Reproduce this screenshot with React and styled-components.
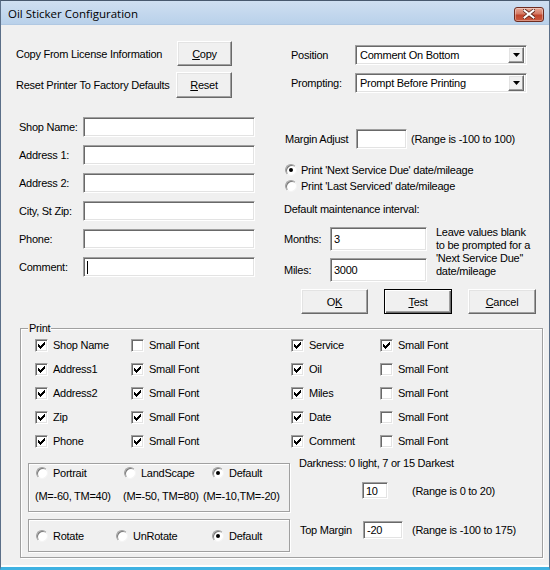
import React from 'react';
import styled, { createGlobalStyle, css } from 'styled-components';

const Global = createGlobalStyle`
  html, body { margin: 0; padding: 0; background: #ffffff; }
  body { font-family: "Liberation Sans", Arial, sans-serif; font-size: 11px; letter-spacing: -0.25px; color: #000; }
  * { box-sizing: border-box; }
`;

const Window = styled.div`
  width: 550px;
  height: 570px;
  display: flex;
  flex-direction: column;
  background: #f0f0f0;
  border: 1px solid #5b6f88;
  border-top-color: #48596e;
  border-bottom: 3px solid #3fb2e2;
  overflow: hidden;
`;

const TitleBar = styled.div`
  height: 24px;
  flex: none;
  display: flex;
  align-items: center;
  justify-content: space-between;
  padding: 0 5px 0 7px;
  background: linear-gradient(#cfdff1, #b9d1ea);
  border-bottom: 1px solid #b0c8e2;
`;

const TitleText = styled.div`
  font-family: "Open Sans", "Liberation Sans", sans-serif;
  font-size: 11.5px;
  letter-spacing: 0;
  color: #000;
  margin-top: 2px;
`;

const CloseButton = styled.div`
  width: 30px;
  height: 15px;
  margin-top: 3px;
  border-radius: 3px;
  border: 1px solid #6e2c20;
  background: linear-gradient(#e7a795 0%, #d47a64 45%, #c0452c 55%, #c95b40 100%);
  box-shadow: inset 0 0 0 1px rgba(255, 255, 255, 0.35);
  display: flex;
  align-items: center;
  justify-content: center;
`;

const Body = styled.div`
  flex: 1;
  display: flex;
  flex-direction: column;
  border-bottom: 2px solid #ffffff;
`;

const Top = styled.div`
  display: flex;
`;

const LeftCol = styled.div`
  width: 283px;
  padding: 16px 0 0 15px;
  display: flex;
  flex-direction: column;
`;

const RightCol = styled.div`
  flex: 1;
  padding-top: 20px;
  display: flex;
  flex-direction: column;
`;

const Row = styled.div`
  display: flex;
  align-items: center;
  height: ${(p) => p.$h || 20}px;
  margin-top: ${(p) => p.$mt || 0}px;
  padding-left: ${(p) => p.$pl || 0}px;
`;

const Label = styled.div`
  width: ${(p) => (p.$w ? `${p.$w}px` : 'auto')};
  flex: none;
  white-space: nowrap;
  margin-left: ${(p) => p.$ml || 0}px;
`;

const raised = css`
  background: #f0f0f0;
  border: 1px solid;
  border-color: #ffffff #696969 #696969 #ffffff;
  box-shadow: inset -1px -1px 0 #a0a0a0, inset 1px 1px 0 #e3e3e3;
`;

const sunken = css`
  background: #ffffff;
  border: 1px solid;
  border-color: #a0a0a0 #ffffff #ffffff #a0a0a0;
  box-shadow: inset 1px 1px 0 #696969, inset -1px -1px 0 #e3e3e3;
`;

const Button = styled.div`
  ${raised};
  width: ${(p) => p.$w}px;
  height: ${(p) => p.$h || 25}px;
  flex: none;
  display: flex;
  align-items: center;
  justify-content: center;
  ${(p) =>
    p.$default &&
    css`
      border: 1px solid #000;
      box-shadow: inset 1px 1px 0 #ffffff, inset -1px -1px 0 #696969, inset -2px -2px 0 #a0a0a0;
    `}
`;

const TextBox = styled.div`
  ${sunken};
  width: ${(p) => p.$w}px;
  height: ${(p) => p.$h || 20}px;
  flex: none;
  display: flex;
  align-items: center;
  padding-left: 3px;
  white-space: nowrap;
`;

const Caret = styled.span`
  width: 1px;
  height: 13px;
  background: #000;
`;

const Combo = styled.div`
  ${sunken};
  width: 172px;
  height: 20px;
  flex: none;
  display: flex;
  align-items: center;
  justify-content: space-between;
  padding: 0 2px 0 4px;
`;

const DropButton = styled.div`
  ${raised};
  width: 16px;
  height: 16px;
  display: flex;
  align-items: center;
  justify-content: center;
`;

const FieldList = styled.div`
  display: flex;
  flex-direction: column;
  gap: 8px;
  margin-top: 19px;
  padding-left: 3px;
`;

const RadioList = styled.div`
  display: flex;
  flex-direction: column;
  margin-top: 13px;
  padding-left: 1px;
`;

const Option = styled.div`
  display: flex;
  align-items: center;
  height: 16px;
  width: ${(p) => (p.$w ? `${p.$w}px` : 'auto')};
  flex: none;
  white-space: nowrap;
`;

const RadioCircle = styled.span`
  width: 12px;
  height: 12px;
  flex: none;
  border-radius: 50%;
  background: #ffffff;
  border: 1px solid;
  border-color: #a0a0a0 #f4f4f4 #f4f4f4 #a0a0a0;
  box-shadow: inset 1px 1px 0 #7a7a7a;
  display: flex;
  align-items: center;
  justify-content: center;
  margin-right: ${(p) => p.$gap || 4}px;
  &::after {
    content: '';
    width: 4px;
    height: 4px;
    border-radius: 50%;
    background: ${(p) => (p.$on ? '#000' : 'transparent')};
  }
`;

const CheckSquare = styled.span`
  width: 13px;
  height: 13px;
  flex: none;
  ${sunken};
  display: flex;
  align-items: center;
  justify-content: center;
  margin-right: 5px;
`;

const IntervalLabel = styled.div`
  margin-top: ${(p) => (p.$mt === undefined ? 8 : p.$mt)}px;
  height: 14px;
  line-height: 14px;
  white-space: nowrap;
`;

const IntervalBlock = styled.div`
  display: flex;
  margin-top: 11px;
`;

const IntervalFields = styled.div`
  display: flex;
  flex-direction: column;
  gap: 7px;
`;

const Note = styled.div`
  margin-left: 9px;
  line-height: 13px;
  margin-top: -1px;
`;

const ButtonRow = styled.div`
  display: flex;
  gap: 16px;
  margin-top: 7px;
  padding-left: 17px;
`;

const Group = styled.div`
  position: relative;
  margin: 14px 0 0 19px;
  width: 523px;
  height: 230px;
  border: 1px solid #a0a0a0;
  box-shadow: inset 1px 1px 0 #ffffff, 1px 1px 0 #ffffff;
`;

const GroupCaption = styled.span`
  position: absolute;
  top: -8px;
  left: 7px;
  padding: 0 1px;
  background: #f0f0f0;
  line-height: 14px;
`;

const CheckGrid = styled.div`
  display: grid;
  grid-template-columns: 96px 160px 89px 1fr;
  grid-auto-rows: 24px;
  padding: 4px 0 0 14px;
`;

const CheckCell = styled.div`
  display: flex;
  align-items: center;
  white-space: nowrap;
`;

const BottomArea = styled.div`
  display: flex;
  margin-top: 3px;
`;

const LeftStack = styled.div`
  display: flex;
  flex-direction: column;
  gap: 7px;
  margin-left: 7px;
  padding-top: 7px;
  width: 262px;
`;

const EtchedBox = styled.div`
  height: ${(p) => p.$h}px;
  border: 1px solid #a0a0a0;
  box-shadow: inset 1px 1px 0 #ffffff, 1px 1px 0 #ffffff;
  padding: ${(p) => p.$pt}px 0 0 7px;
`;

const InlineRow = styled.div`
  display: flex;
  align-items: center;
  height: ${(p) => p.$h || 16}px;
  margin-top: ${(p) => p.$mt || 0}px;
  margin-left: ${(p) => p.$ml || 0}px;
`;

const RightStack = styled.div`
  display: flex;
  flex-direction: column;
  margin-left: 9px;
`;

const Mn = styled.span`
  text-decoration: underline;
`;

const Check = ({ on }) => (
  <CheckSquare>
    {on && (
      <svg width="7" height="7" viewBox="0 0 7 7" shapeRendering="crispEdges">
        <path d="M6 0h1v1h-1zM5 1h2v1h-2zM0 2h1v1h-1zM4 2h3v1h-3zM0 3h2v1h-2zM3 3h3v1h-3zM0 4h5v1h-5zM1 5h3v1h-3zM2 6h1v1h-1z" fill="#000" />
      </svg>
    )}
  </CheckSquare>
);

const CheckItem = ({ on, children }) => (
  <CheckCell>
    <Check on={on} />
    {children}
  </CheckCell>
);

const Radio = ({ on, w, children, gap }) => (
  <Option $w={w}>
    <RadioCircle $on={on} $gap={gap} />
    {children}
  </Option>
);

const Arrow = () => (
  <svg width="7" height="4" viewBox="0 0 7 4">
    <path d="M0 0h7L3.5 4z" fill="#000" />
  </svg>
);

const Select = ({ value }) => (
  <Combo>
    <span>{value}</span>
    <DropButton>
      <Arrow />
    </DropButton>
  </Combo>
);

const fields = ['Shop Name:', 'Address 1:', 'Address 2:', 'City, St Zip:', 'Phone:', 'Comment:'];

const checks = [
  ['Shop Name', true, false, 'Service', true, true],
  ['Address1', true, true, 'Oil', true, false],
  ['Address2', true, true, 'Miles', true, false],
  ['Zip', true, true, 'Date', true, false],
  ['Phone', true, true, 'Comment', true, false],
];

export default function App() {
  return (
    <>
      <Global />
      <Window>
        <TitleBar>
          <TitleText>Oil Sticker Configuration</TitleText>
          <CloseButton>
            <svg width="12" height="10" viewBox="0 0 12 10">
              <path d="M1.5 1.5L10.5 8.5M10.5 1.5L1.5 8.5" stroke="#5a2418" strokeWidth="3.6" strokeLinecap="square" />
              <path d="M1.5 1.5L10.5 8.5M10.5 1.5L1.5 8.5" stroke="#ffffff" strokeWidth="2" strokeLinecap="square" />
            </svg>
          </CloseButton>
        </TitleBar>
        <Body>
          <Top>
            <LeftCol>
              <Row $h={25}>
                <Label $w={161}>Copy From License Information</Label>
                <Button $w={55}>
                  <span><Mn>C</Mn>opy</span>
                </Button>
              </Row>
              <Row $h={26} $mt={6}>
                <Label $w={160}>Reset Printer To Factory Defaults</Label>
                <Button $w={56} $h={26}>
                  <span><Mn>R</Mn>eset</span>
                </Button>
              </Row>
              <FieldList>
                {fields.map((f) => (
                  <Row key={f}>
                    <Label $w={64}>{f}</Label>
                    <TextBox $w={172}>{f === 'Comment:' && <Caret />}</TextBox>
                  </Row>
                ))}
              </FieldList>
            </LeftCol>
            <RightCol>
              <Row $pl={7}>
                <Label $w={64}>Position</Label>
                <Select value="Comment On Bottom" />
              </Row>
              <Row $pl={7} $mt={8}>
                <Label $w={64}>Prompting:</Label>
                <Select value="Prompt Before Printing" />
              </Row>
              <Row $pl={1} $mt={36}>
                <Label $w={71}>Margin Adjust</Label>
                <TextBox $w={51} />
                <Label $ml={4}>(Range is -100 to 100)</Label>
              </Row>
              <RadioList>
                <Radio on>Print 'Next Service Due' date/mileage</Radio>
                <Radio>Print 'Last Serviced' date/mileage</Radio>
              </RadioList>
              <IntervalLabel>Default maintenance interval:</IntervalLabel>
              <IntervalBlock>
                <IntervalFields>
                  <Row $h={24}>
                    <Label $w={46}>Months:</Label>
                    <TextBox $w={97} $h={24}>3</TextBox>
                  </Row>
                  <Row $h={24}>
                    <Label $w={46}>Miles:</Label>
                    <TextBox $w={97} $h={24}>3000</TextBox>
                  </Row>
                </IntervalFields>
                <Note>
                  Leave values blank
                  <br />
                  to be prompted for a
                  <br />
                  'Next Service Due''
                  <br />
                  date/mileage
                </Note>
              </IntervalBlock>
              <ButtonRow>
                <Button $w={67}>
                  <span>O<Mn>K</Mn></span>
                </Button>
                <Button $w={68} $default>
                  <span><Mn>T</Mn>est</span>
                </Button>
                <Button $w={68}>
                  <span><Mn>C</Mn>ancel</span>
                </Button>
              </ButtonRow>
            </RightCol>
          </Top>
          <Group>
            <GroupCaption>Print</GroupCaption>
            <CheckGrid>
              {checks.map(([a, ac, as, b, bc, bs]) => (
                <React.Fragment key={a}>
                  <CheckItem on={ac}>{a}</CheckItem>
                  <CheckItem on={as}>Small Font</CheckItem>
                  <CheckItem on={bc}>{b}</CheckItem>
                  <CheckItem on={bs}>Small Font</CheckItem>
                </React.Fragment>
              ))}
            </CheckGrid>
            <BottomArea>
              <LeftStack>
                <EtchedBox $h={49} $pt={1}>
                  <InlineRow>
                    <Radio w={88} gap={5}>Portrait</Radio>
                    <Radio w={88} gap={5}>LandScape</Radio>
                    <Radio on gap={5}>Default</Radio>
                  </InlineRow>
                  <InlineRow $h={14} $mt={8} $ml={-1}>
                    <Label $w={88}>(M=-60, TM=40)</Label>
                    <Label $w={80}>(M=-50, TM=80)</Label>
                    <Label>(M=-10,TM=-20)</Label>
                  </InlineRow>
                </EtchedBox>
                <EtchedBox $h={33} $pt={8}>
                  <InlineRow>
                    <Radio w={80} gap={5}>Rotate</Radio>
                    <Radio w={96} gap={5}>UnRotate</Radio>
                    <Radio on gap={5}>Default</Radio>
                  </InlineRow>
                </EtchedBox>
              </LeftStack>
              <RightStack>
                <IntervalLabel $mt={0}>Darkness: 0 light, 7 or 15 Darkest</IntervalLabel>
                <Row $h={17} $mt={12} $pl={63}>
                  <TextBox $w={26} $h={17}>10</TextBox>
                  <Label $ml={24}>(Range is 0 to 20)</Label>
                </Row>
                <Row $h={18} $mt={22} $pl={1}>
                  <Label $w={63}>Top Margin</Label>
                  <TextBox $w={40} $h={18}>-20</TextBox>
                  <Label $ml={9}>(Range is -100 to 175)</Label>
                </Row>
              </RightStack>
            </BottomArea>
          </Group>
        </Body>
      </Window>
    </>
  );
}
